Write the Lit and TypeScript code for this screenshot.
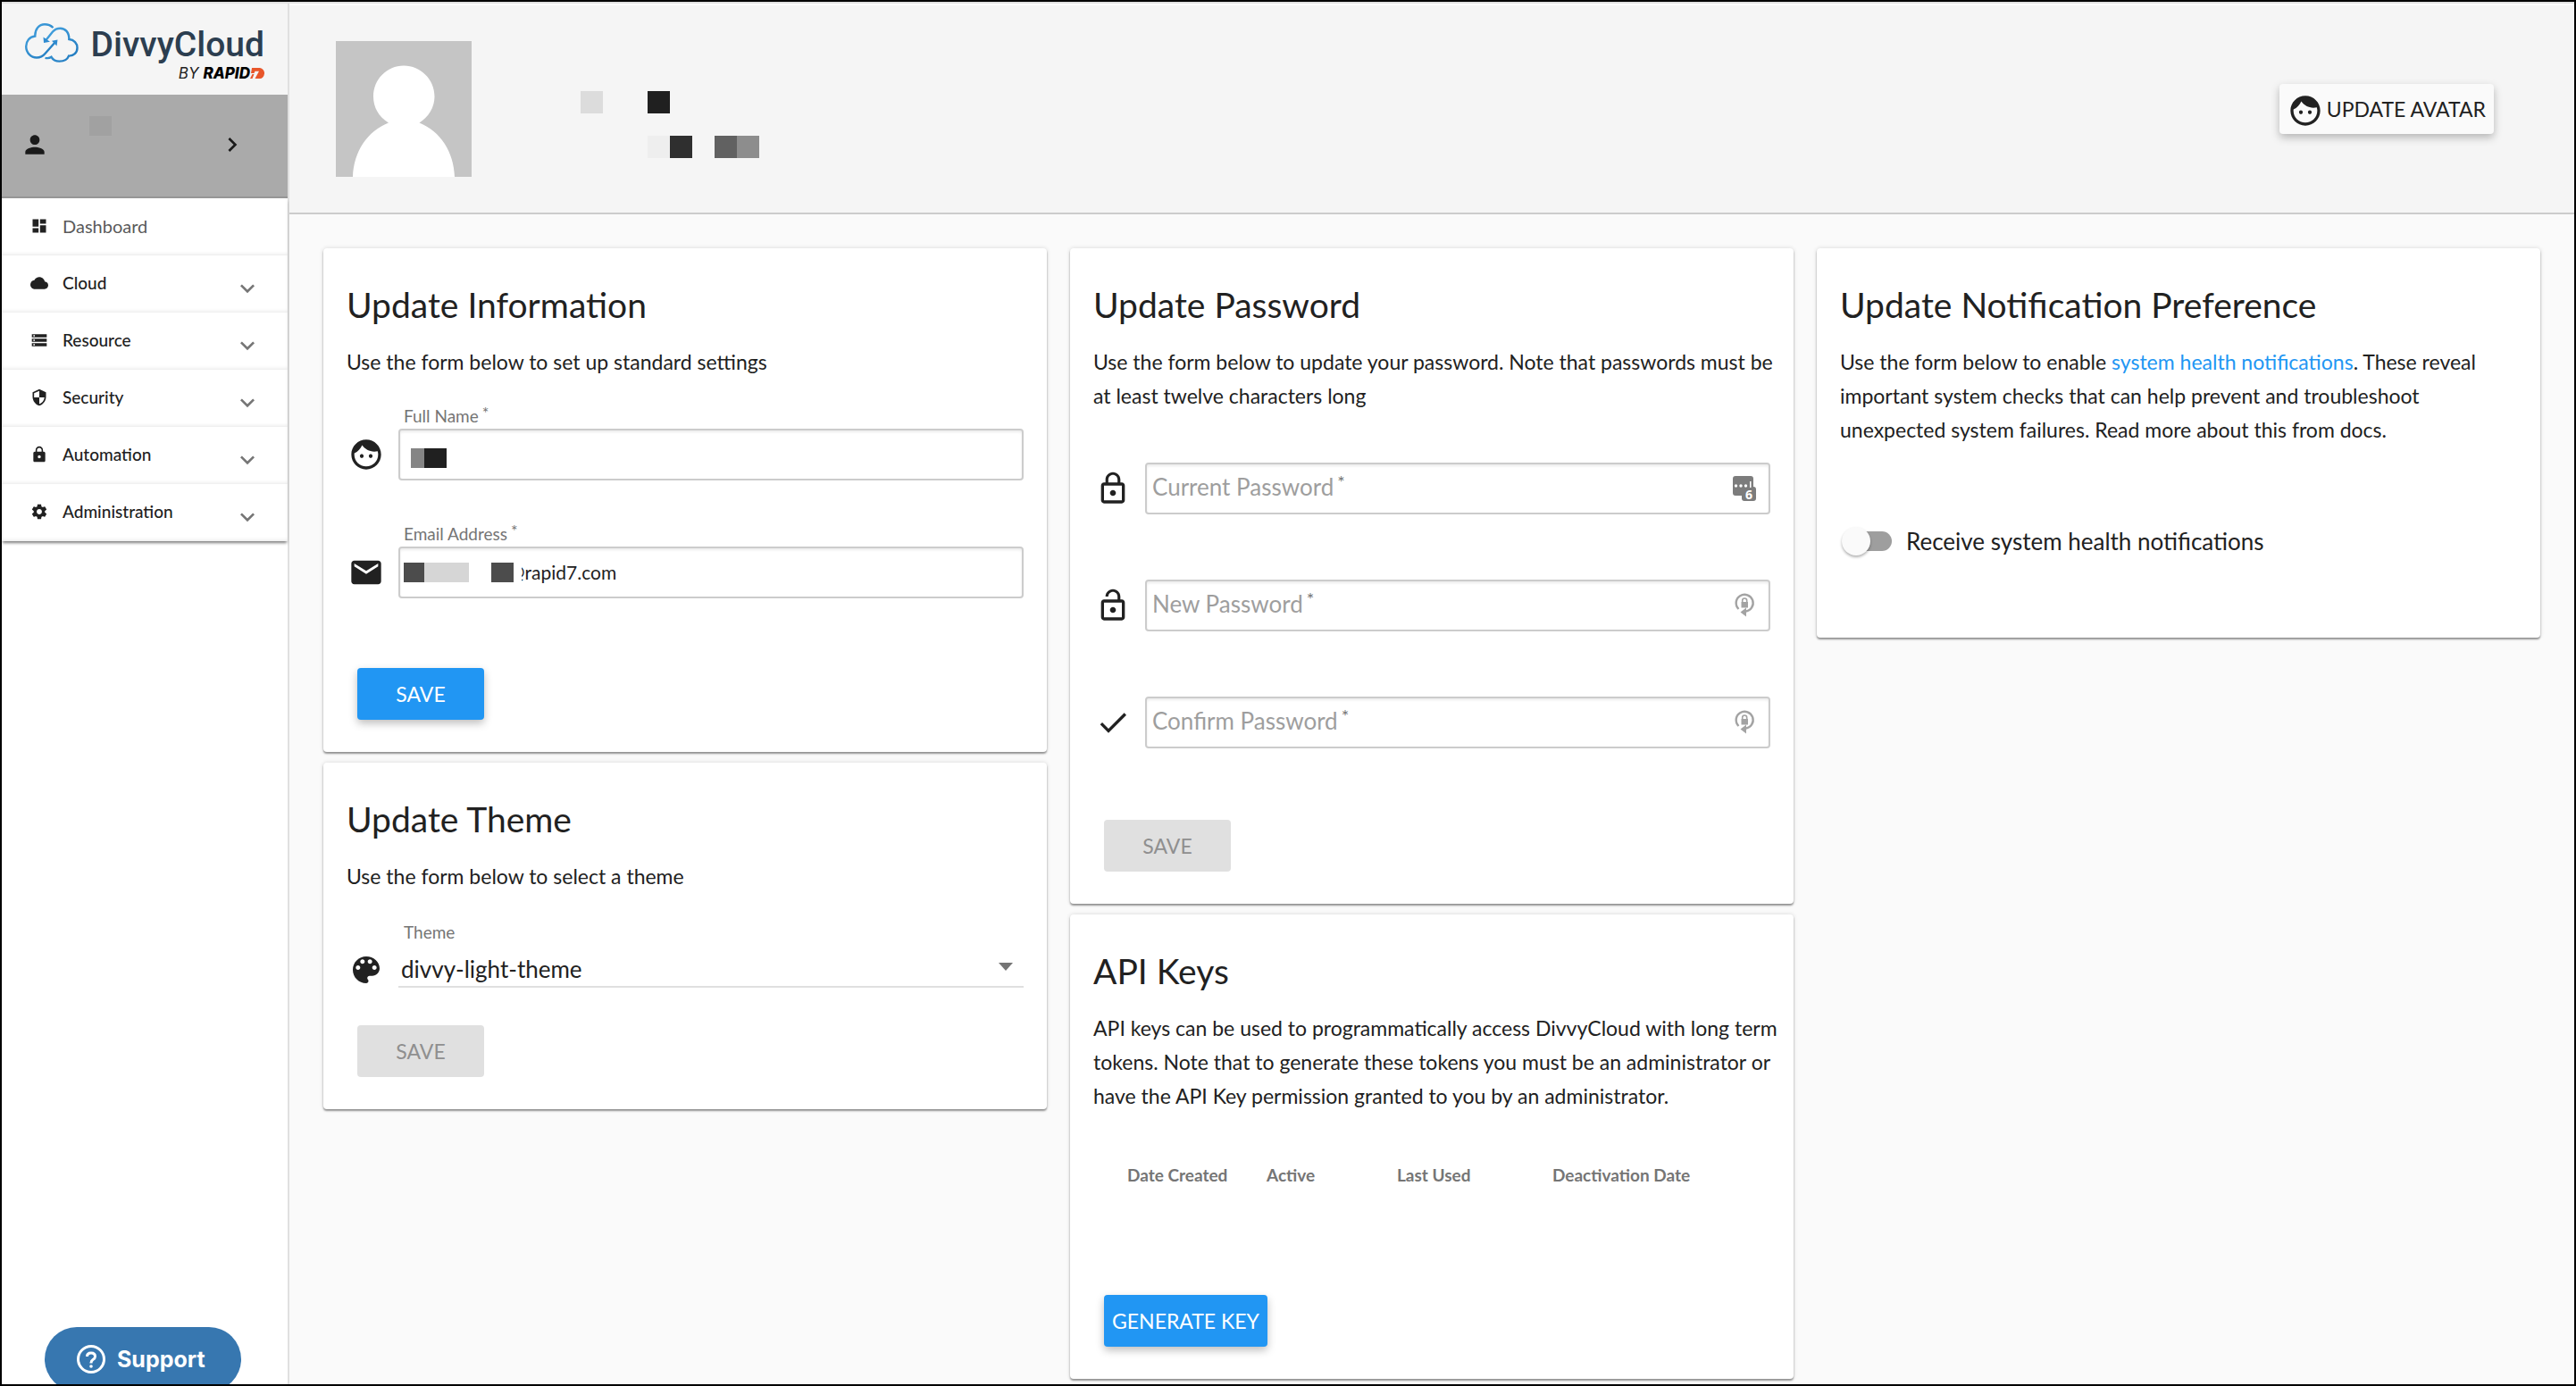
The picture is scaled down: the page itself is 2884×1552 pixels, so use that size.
import { LitElement, html, svg, css, nothing } from "lit";
import { customElement, property } from "lit/decorators.js";

const icons: Record<string, unknown> = {
  dashboard: svg`<path d="M3 13h8V3H3v10zm0 8h8v-6H3v6zm10 0h8V11h-8v10zm0-18v6h8V3h-8z"/>`,
  cloud: svg`<path d="M19.35 10.04C18.67 6.59 15.64 4 12 4 9.11 4 6.6 5.64 5.35 8.04 2.34 8.36 0 10.91 0 14c0 3.31 2.69 6 6 6h13c2.76 0 5-2.24 5-5 0-2.64-2.05-4.78-4.65-4.96z"/>`,
  storage: svg`<path d="M2 20h20v-4H2v4zm2-3h2v2H4v-2zM2 4v4h20V4H2zm4 3H4V5h2v2zm-4 7h20v-4H2v4zm2-3h2v2H4v-2z"/>`,
  security: svg`<path d="M12 1L3 5v6c0 5.55 3.84 10.74 9 12 5.16-1.26 9-6.45 9-12V5l-9-4zm0 10.99h7c-.53 4.12-3.28 7.79-7 8.94V12H5V6.3l7-3.11v8.8z"/>`,
  lock: svg`<path d="M18 8h-1V6c0-2.76-2.24-5-5-5S7 3.24 7 6v2H6c-1.1 0-2 .9-2 2v10c0 1.1.9 2 2 2h12c1.1 0 2-.9 2-2V10c0-1.1-.9-2-2-2zm-6 9c-1.1 0-2-.9-2-2s.9-2 2-2 2 .9 2 2-.9 2-2 2zm3.1-9H8.9V6c0-1.71 1.39-3.1 3.1-3.1 1.71 0 3.1 1.39 3.1 3.1v2z"/>`,
  settings: svg`<path d="M19.43 12.98c.04-.32.07-.64.07-.98s-.03-.66-.07-.98l2.11-1.65c.19-.15.24-.42.12-.64l-2-3.46c-.12-.22-.39-.3-.61-.22l-2.49 1c-.52-.4-1.08-.73-1.69-.98l-.38-2.65C14.46 2.18 14.25 2 14 2h-4c-.25 0-.46.18-.49.42l-.38 2.65c-.61.25-1.17.59-1.69.98l-2.49-1c-.23-.09-.49 0-.61.22l-2 3.46c-.13.22-.07.49.12.64l2.11 1.65c-.04.32-.07.65-.07.98s.03.66.07.98l-2.11 1.65c-.19.15-.24.42-.12.64l2 3.46c.12.22.39.3.61.22l2.49-1c.52.4 1.08.73 1.69.98l.38 2.65c.03.24.24.42.49.42h4c.25 0 .46-.18.49-.42l.38-2.65c.61-.25 1.17-.59 1.69-.98l2.49 1c.23.09.49 0 .61-.22l2-3.46c.12-.22.07-.49-.12-.64l-2.11-1.65zM12 15.5c-1.93 0-3.5-1.57-3.5-3.5s1.57-3.5 3.5-3.5 3.5 1.57 3.5 3.5-1.57 3.5-3.5 3.5z"/>`,
  person: svg`<path d="M12 12c2.21 0 4-1.79 4-4s-1.79-4-4-4-4 1.79-4 4 1.79 4 4 4zm0 2c-2.67 0-8 1.34-8 4v2h16v-2c0-2.66-5.33-4-8-4z"/>`,
  right: svg`<path d="M10 6L8.59 7.41 13.17 12l-4.58 4.59L10 18l6-6z"/>`,
  down: svg`<path d="M7.41 7.84L12 12.42l4.59-4.58L18 9.25l-6 6-6-6z"/>`,
  face: svg`<path d="M9 11.75c-.69 0-1.25.56-1.25 1.25s.56 1.25 1.25 1.25 1.25-.56 1.25-1.25-.56-1.25-1.25-1.25zm6 0c-.69 0-1.25.56-1.25 1.25s.56 1.25 1.25 1.25 1.25-.56 1.25-1.25-.56-1.25-1.25-1.25zM12 2C6.48 2 2 6.48 2 12s4.48 10 10 10 10-4.48 10-10S17.52 2 12 2zm0 18c-4.41 0-8-3.59-8-8 0-.29.02-.58.05-.86 2.36-1.05 4.23-2.98 5.21-5.37C11.07 8.33 14.05 10 17.42 10c.78 0 1.53-.09 2.25-.26.21.71.33 1.47.33 2.26 0 4.41-3.59 8-8 8z"/>`,
  email: svg`<path d="M20 4H4c-1.1 0-1.99.9-1.99 2L2 18c0 1.1.9 2 2 2h16c1.1 0 2-.9 2-2V6c0-1.1-.9-2-2-2zm0 4l-8 5-8-5V6l8 5 8-5v2z"/>`,
  palette: svg`<path d="M12 3c-4.97 0-9 4.03-9 9s4.03 9 9 9c.83 0 1.5-.67 1.5-1.5 0-.39-.15-.74-.39-1.01-.23-.26-.38-.61-.38-.99 0-.83.67-1.5 1.5-1.5H16c2.76 0 5-2.24 5-5 0-4.42-4.03-8-9-8zm-5.5 9c-.83 0-1.5-.67-1.5-1.5S5.67 9 6.5 9 8 9.67 8 10.5 7.33 12 6.5 12zm3-4C8.67 8 8 7.33 8 6.5S8.67 5 9.5 5s1.5.67 1.5 1.5S10.33 8 9.5 8zm5 0c-.83 0-1.5-.67-1.5-1.5S13.67 5 14.5 5s1.5.67 1.5 1.5S15.33 8 14.5 8zm3 4c-.83 0-1.5-.67-1.5-1.5S16.67 9 17.5 9s1.5.67 1.5 1.5-.67 1.5-1.5 1.5z"/>`,
  lockOutline: svg`<path d="M12 17c1.1 0 2-.9 2-2s-.9-2-2-2-2 .9-2 2 .9 2 2 2zm6-9h-1V6c0-2.76-2.24-5-5-5S7 3.24 7 6v2H6c-1.1 0-2 .9-2 2v10c0 1.1.9 2 2 2h12c1.1 0 2-.9 2-2V10c0-1.1-.9-2-2-2zM8.9 6c0-1.71 1.39-3.1 3.1-3.1s3.1 1.39 3.1 3.1v2H8.9V6zM18 20H6V10h12v10z"/>`,
  lockOpen: svg`<path d="M12 17c1.1 0 2-.9 2-2s-.9-2-2-2-2 .9-2 2 .9 2 2 2zm6-9h-1V6c0-2.76-2.24-5-5-5S7 3.24 7 6h1.9c0-1.71 1.39-3.1 3.1-3.1 1.71 0 3.1 1.39 3.1 3.1v2H6c-1.1 0-2 .9-2 2v10c0 1.1.9 2 2 2h12c1.1 0 2-.9 2-2V10c0-1.1-.9-2-2-2zm0 12H6V10h12v10z"/>`,
  check: svg`<path d="M9 16.17L4.83 12l-1.42 1.41L9 19 21 7l-1.41-1.41z"/>`,
};

const icon = (name: string, cls: string) =>
  html`<svg class="icon ${cls}" viewBox="0 0 24 24" aria-hidden="true">${icons[name]}</svg>`;

const shared = css`
  :host { display: block; box-sizing: border-box; }
  * { box-sizing: border-box; }
  .icon { display: block; flex: none; fill: currentColor; }
  .s20 { width: 20px; height: 20px; }
  .s32 { width: 32px; height: 32px; }
  .s40 { width: 40px; height: 40px; }
  button, input, select { font: inherit; color: inherit; margin: 0; }
  .btn {
    display: inline-flex; align-items: center; justify-content: center;
    height: 58px; min-width: 142px; padding: 0 9px; border: 0; border-radius: 4px;
    font-size: 23px; line-height: 32px; background: #2196f3; color: #fff;
    box-shadow: 0 4px 10px rgba(0, 0, 0, 0.26);
  }
  .btn:disabled { background: #e0e0e0; color: #8f8f8f; box-shadow: none; }
  .blocks { display: flex; flex: none; }
`;

/* Row of solid squares that hide a private value; null leaves a gap. */
const blocks = (cells: [number, string | null][], height: number) => html`
  <svg class="blocks" width=${cells.reduce((s, c) => s + c[0], 0)} height=${height} aria-hidden="true">
    ${cells.map((c, i) => {
      const x = cells.slice(0, i).reduce((s, p) => s + p[0], 0);
      return c[1] ? svg`<rect x=${x} width=${c[0]} height=${height} fill=${c[1]}></rect>` : nothing;
    })}
  </svg>`;

@customElement("brand-logo")
class BrandLogo extends LitElement {
  static styles = [shared, css`
    .logo { display: flex; padding: 22px 26px 0 26px; height: 102px; background: #f5f5f5; }
    .mark { width: 60px; height: 44px; flex: none; fill: none; }
    .words { flex: 1; display: flex; flex-direction: column; align-items: flex-end; padding-top: 2px; }
    .name { font: 500 39px/44px Roboto, sans-serif; color: #2c3e50; }
    .by { display: flex; align-items: center; font: italic 17px/20px Inter, sans-serif; color: #222; }
    .rapid { font-weight: 800; color: #000; margin-left: 5px; }
    .seven { width: 16px; height: 12px; }
  `];
  render() {
    return html`<div class="logo">
      <svg class="mark" viewBox="0 0 60 44" aria-hidden="true">
        <defs><linearGradient id="g" x1="0" y1="0" x2="1" y2="1">
          <stop offset="0" stop-color="#45a3e0"/><stop offset="1" stop-color="#1f78bd"/></linearGradient></defs>
        <g stroke="url(#g)" stroke-width="2.4">
          <path d="M31.5 5C28.5 2 25 1.2 22 1.2C16 1.2 11 6 11.3 14.5C5 15 1.2 20 1.2 26C1.2 33 6.5 38.5 13 38.5C17 38.5 20 37 22.5 34L34 21"/>
          <path d="M23 19.5L31 9.5C33.5 6.5 36.5 5.7 39.5 5.7C45 5.7 49.5 10 49.3 18C55 18.5 58.5 22.5 58.5 27.5C58.5 33 54.5 36.8 49 36.6C47.5 40.5 43 42.6 38.5 42.6C34 42.6 31 40.5 29.5 37.8C27.5 39.2 25 39.4 22.5 38.8"/>
        </g>
        <path fill="#2f8bd0" d="M20.5 15.5L21 22L28 20.7z M36.5 18.5L30 19.7L35.5 25.5z"/>
      </svg>
      <div class="words">
        <span class="name">DivvyCloud</span>
        <span class="by">BY<span class="rapid">RAPID</span>
          <svg class="seven" viewBox="0 0 16 12" aria-hidden="true">
            <path fill="#e8562a" d="M2 0H11A5.5 6 0 0 1 10 12H5.5L10 3.8H5.5L4.5 6H1z M0 12L2.5 7H4.5L2.5 12z"/></svg>
        </span>
      </div>
    </div>`;
  }
}

@customElement("side-nav")
class SideNav extends LitElement {
  static styles = [shared, css`
    .user {
      display: flex; align-items: center; width: 100%; height: 116px; padding: 0 46px 2px 21px;
      border: 0; border-bottom: 2px solid #969696; background: #aaa; color: #1a1a1a;
    }
    .user .blocks { margin: 0 auto 42px 45px; }
    .menu { list-style: none; margin: 0; padding: 0; background: #fff; box-shadow: 0 3px 3px -1px rgba(0, 0, 0, 0.5); }
    .entry {
      display: flex; align-items: center; width: 100%; height: 64px; border: 0; padding: 0 29px 2px 32px;
      background: #fff; color: #212121; font-size: 19px; line-height: 24px; font-weight: 500; text-decoration: none;
      box-shadow: inset 0 -2px 4px -1px rgba(0, 0, 0, 0.1);
    }
    .entry:is(a) { color: #5a5a5a; font-size: 20px; font-weight: 400; }
    .entry:is(a) .icon { color: #212121; }
    .text { flex: 1; text-align: left; margin-left: 16px; }
    .caret { color: #757575; margin-top: 14px; }
  `];
  render() {
    const groups = [["cloud", "Cloud"], ["storage", "Resource"], ["security", "Security"],
      ["lock", "Automation"], ["settings", "Administration"]];
    return html`
      <button class="user" aria-label="Account">
        ${icon("person", "s32")}${blocks([[25, "#a1a1a1"]], 22)}${icon("right", "s32")}
      </button>
      <ul class="menu">
        <li><a class="entry" href="#dashboard">${icon("dashboard", "s20")}<span class="text">Dashboard</span></a></li>
        ${groups.map(([i, t]) => html`<li><button class="entry">
          ${icon(i, "s20")}<span class="text">${t}</span>${icon("down", "s32 caret")}</button></li>`)}
      </ul>`;
  }
}

@customElement("form-card")
class FormCard extends LitElement {
  @property() heading = "";
  static styles = [shared, css`
    :host {
      background: #fff; border-radius: 4px; padding: 38px 26px 36px;
      box-shadow: 0 2px 2px rgba(0, 0, 0, 0.38), 0 0 5px rgba(0, 0, 0, 0.14);
    }
    .heading { margin: 0 0 20px; font-size: 39px; line-height: 50px; font-weight: 400; }
  `];
  render() {
    return html`<h2 class="heading">${this.heading}</h2><slot></slot>`;
  }
}

@customElement("app-root")
class AppRoot extends LitElement {
  static styles = [shared, css`
    :host {
      display: flex; min-height: 100vh; border: 2px solid #000; background: #fafafa; overflow: hidden;
      font-family: Lato, "Open Sans", sans-serif; color: #212121;
    }
    .side { position: relative; width: 322px; flex: none; background: #fff; border-top: 2px solid #e0e0e0; border-right: 2px solid #e0e0e0; }
    .support {
      position: absolute; left: 48px; bottom: -8px; width: 220px; height: 72px; border: 0; border-radius: 36px;
      display: flex; align-items: center; padding: 0 36px; gap: 13px; background: #3777b0; color: #fff;
      font: 700 25px/32px Inter, sans-serif;
    }
    .help { width: 32px; height: 32px; flex: none; fill: none; stroke: #fff; }
    .main { flex: 1; min-width: 0; border-top: 2px solid #e0e0e0; }
    .banner {
      display: flex; align-items: center; padding: 40px 90px 40px 52px;
      background: #f5f5f5; border-top: 2px solid #fff; border-bottom: 2px solid #ccc;
    }
    .avatar { width: 152px; height: 152px; flex: none; }
    .who { display: flex; flex-direction: column; gap: 25px; margin: 35px auto 0 122px; }
    .btn.plain { min-width: 0; height: 56px; padding: 0 9px; gap: 4px; background: #fafafa; color: #212121; }
    .btn.plain .icon { margin-top: 4px; }
    .columns { display: grid; grid-template-columns: repeat(3, minmax(0, 1fr)); gap: 26px; align-items: start; padding: 38px 38px 6px; }
    .column { display: flex; flex-direction: column; gap: 12px; }
    .note { margin: 0 -10px 0 0; font-size: 23px; line-height: 38px; }
    .note a { color: #2196f3; text-decoration: none; }
    .rows { display: flex; flex-direction: column; gap: 42px; margin: 24px 0 78px; }
    .row { display: grid; grid-template-columns: 40px 1fr; column-gap: 16px; padding-left: 2px; }
    .row .icon { grid-row: 2; align-self: center; }
    .label { grid-column: 2; grid-row: 1; height: 32px; padding: 4px 6px 0; font-size: 19px; line-height: 28px; color: #757575; }
    .star { font-size: 18px; line-height: 0; vertical-align: 4px; margin-left: 4px; }
    .box {
      grid-column: 2; grid-row: 2; position: relative; display: flex; align-items: center; height: 58px; min-width: 0;
      border: 2px solid #ccc; border-radius: 4px; background: #fff; box-shadow: inset 0 2px 3px rgba(0, 0, 0, 0.08);
    }
    .box .value { flex: 1; min-width: 0; height: 54px; border: 0; outline: 0; background: none; padding: 0 8px; font-size: 21px; }
    .box .value.cut { padding: 0 0 2px; text-indent: -14px; }
    .box .blocks { margin: 0 9px 0 4px; }
    .box.low .blocks { margin-top: 8px; }
    .hint { position: absolute; left: 6px; top: 9px; font-size: 26px; line-height: 32px; color: #9e9e9e; pointer-events: none; }
    .hint .star { font-size: 20px; vertical-align: 8px; color: #757575; }
    .tool { width: 28px; height: 28px; flex: none; margin-right: 13px; overflow: visible; }
    .act { margin-left: 12px; }
    .rows.passwords { gap: 73px; margin: 56px 0 80px; }
    .rows.theme { margin: 26px 0 42px; }
    .pick { grid-column: 2; grid-row: 2; position: relative; height: 48px; border-bottom: 2px solid #e0e0e0; }
    .pick select { appearance: none; width: 100%; height: 46px; border: 0; background: none; padding: 8px 3px 0; font-size: 26px; outline: 0; }
    .pick .tri { position: absolute; right: 12px; top: 20px; border: 8px solid transparent; border-top: 9px solid #757575; border-bottom: 0; pointer-events: none; }
    .theme .icon { margin-top: 8px; }
    .keys { border-collapse: collapse; width: 100%; margin: 48px 0 62px; table-layout: fixed; }
    .keys th { height: 94px; vertical-align: top; padding: 10px 0 0; text-align: left; font-size: 19px; line-height: 24px; font-weight: 700; color: #757575; }
    .keys .lead { width: 38px; }
    .keys .c1 { width: 156px; } .keys .c2 { width: 146px; } .keys .c3 { width: 174px; }
    .switch { display: flex; align-items: center; gap: 16px; margin: 88px 0 54px 2px; font-size: 26px; line-height: 36px; }
    .switch input { appearance: none; position: relative; width: 56px; height: 32px; flex: none; }
    .switch input::before { content: ""; position: absolute; inset: 5px 0 5px 4px; border-radius: 11px; background: #9e9e9e; }
    .switch input::after { content: ""; position: absolute; left: 0; top: 0; width: 32px; height: 32px; border-radius: 50%; background: #fafafa; box-shadow: 0 2px 3px rgba(0, 0, 0, 0.3); }
  `];

  private password(id: string, iconName: string, text: string, current = false) {
    return html`<div class="row">
      ${icon(iconName, "s40")}
      <div class="box">
        <label class="hint" for=${id}>${text}<span class="star">*</span></label>
        <input class="value" id=${id} type="password" required />
        ${current
          ? html`<svg class="tool" viewBox="0 0 28 28" aria-hidden="true">
              <path fill="#7c7c7c" d="M4 0H21Q24 0 24 3V12H24Q27 12 27 15V25Q27 28 24 28H14Q11 28 11 25V22H4Q1 22 1 19V3Q1 0 4 0z"/>
              <g fill="#fff"><circle cx="4.5" cy="11" r="1.7"/><circle cx="10" cy="11" r="1.7"/><circle cx="15.5" cy="11" r="1.7"/><path d="M20 6h1.5v7H20z"/></g>
              <text x="19" y="26" text-anchor="middle" font-family="Open Sans, sans-serif" font-size="14" font-weight="700" fill="#fff">6</text></svg>`
          : html`<svg class="tool" viewBox="0 0 28 28" aria-hidden="true">
              <path fill="none" stroke="#a3a3a3" stroke-width="2.4" d="M7.5 18A9.5 9.5 0 1 1 15 20.7"/>
              <path fill="#a3a3a3" d="M9.5 21.5L16 16.5V26.5z M10.5 10H18V16.5H10.5z"/>
              <path fill="none" stroke="#a3a3a3" stroke-width="1.6" d="M11.7 10.5V8.5A2.5 2.5 0 0 1 16.7 8.5V10.5"/></svg>`}
      </div>
    </div>`;
  }

  render() {
    return html`
      <nav class="side" aria-label="Main">
        <brand-logo></brand-logo>
        <side-nav></side-nav>
        <button class="support">
          <svg class="help" viewBox="0 0 32 32" aria-hidden="true">
            <circle cx="16" cy="16" r="14.5" stroke-width="3"/>
            <path stroke-width="3" d="M11.5 13Q11.5 9 16 9T20.5 13Q20.5 15 18 16.5Q16 17.8 16 20.5"/>
            <circle cx="16" cy="24" r="1.8" fill="#fff" stroke="none"/></svg>Support
        </button>
      </nav>
      <main class="main">
        <header class="banner">
          <svg class="avatar" viewBox="0 0 152 152" role="img" aria-label="Avatar">
            <path fill="#c5c5c5" d="M0 0h152v152H0z"/>
            <path fill="#fff" d="M76 27.5C95 27.5 110.5 43 110.5 62C110.5 74 104 85 93.5 91.5C117 101 132 124 133 152H19C20 124 35 101 59 91.5C48 85 42 74 42 62C42 43 57 27.5 76 27.5z"/>
          </svg>
          <div class="who">
            ${blocks([[25, "#dcdcdc"], [50, null], [25, "#202020"]], 25)}
            ${blocks([[75, null], [25, "#eee"], [25, "#2f2f2f"], [25, null], [25, "#616161"], [25, "#8d8d8d"]], 25)}
          </div>
          <button class="btn plain">${icon("face", "s40")}UPDATE AVATAR</button>
        </header>
        <div class="columns">
          <div class="column">
            <form-card heading="Update Information">
              <p class="note">Use the form below to set up standard settings</p>
              <div class="rows">
                <div class="row">
                  <label class="label" for="full">Full Name<span class="star">*</span></label>
                  ${icon("face", "s40")}
                  <div class="box low">${blocks([[8, null], [15, "#858585"], [25, "#202020"]], 22)}<input class="value" id="full" required /></div>
                </div>
                <div class="row">
                  <label class="label" for="mail">Email Address<span class="star">*</span></label>
                  ${icon("email", "s40")}
                  <div class="box">${blocks([[23, "#4c4c4c"], [50, "#d6d6d6"], [25, null], [25, "#4c4c4c"]], 22)}<input class="value cut" id="mail" required .value=${"@rapid7.com"} /></div>
                </div>
              </div>
              <button class="btn act">SAVE</button>
            </form-card>
            <form-card heading="Update Theme">
              <p class="note">Use the form below to select a theme</p>
              <div class="rows theme">
                <div class="row">
                  <label class="label" for="theme">Theme</label>
                  ${icon("palette", "s40")}
                  <div class="pick"><select id="theme"><option>divvy-light-theme</option></select><span class="tri"></span></div>
                </div>
              </div>
              <button class="btn act" disabled>SAVE</button>
            </form-card>
          </div>
          <div class="column">
            <form-card heading="Update Password">
              <p class="note">Use the form below to update your password. Note that passwords must be at least twelve characters long</p>
              <div class="rows passwords">
                ${this.password("current", "lockOutline", "Current Password", true)}
                ${this.password("fresh", "lockOpen", "New Password")}
                ${this.password("confirm", "check", "Confirm Password")}
              </div>
              <button class="btn act" disabled>SAVE</button>
            </form-card>
            <form-card heading="API Keys">
              <p class="note">API keys can be used to programmatically access DivvyCloud with long term tokens. Note that to generate these tokens you must be an administrator or have the API Key permission granted to you by an administrator.</p>
              <table class="keys">
                <thead><tr>
                  <td class="lead"></td><th class="c1" scope="col">Date Created</th><th class="c2" scope="col">Active</th>
                  <th class="c3" scope="col">Last Used</th><th scope="col">Deactivation Date</th>
                </tr></thead>
              </table>
              <button class="btn act">GENERATE KEY</button>
            </form-card>
          </div>
          <div class="column">
            <form-card heading="Update Notification Preference">
              <p class="note">Use the form below to enable <a href="#health">system health notifications</a>. These reveal important system checks that can help prevent and troubleshoot unexpected system failures. Read more about this from docs.</p>
              <label class="switch"><input type="checkbox" role="switch" />Receive system health notifications</label>
            </form-card>
          </div>
        </div>
      </main>`;
  }
}
